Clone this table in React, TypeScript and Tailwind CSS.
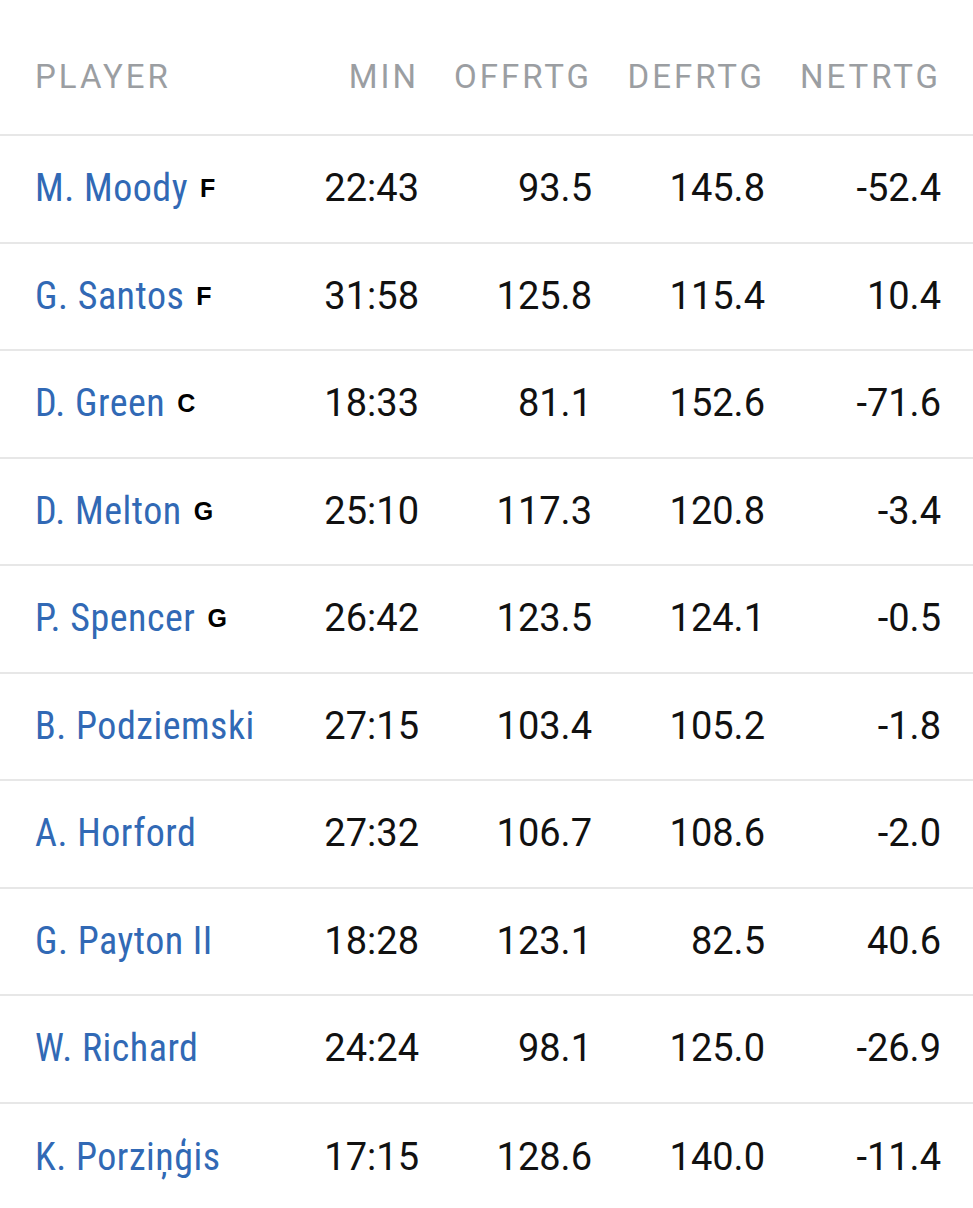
type Row = { name: string; pos?: string; min: string; off: string; def: string; net: string }

const ROWS: Row[] = [
  { name: 'M. Moody', pos: 'F', min: '22:43', off: '93.5', def: '145.8', net: '-52.4' },
  { name: 'G. Santos', pos: 'F', min: '31:58', off: '125.8', def: '115.4', net: '10.4' },
  { name: 'D. Green', pos: 'C', min: '18:33', off: '81.1', def: '152.6', net: '-71.6' },
  { name: 'D. Melton', pos: 'G', min: '25:10', off: '117.3', def: '120.8', net: '-3.4' },
  { name: 'P. Spencer', pos: 'G', min: '26:42', off: '123.5', def: '124.1', net: '-0.5' },
  { name: 'B. Podziemski', min: '27:15', off: '103.4', def: '105.2', net: '-1.8' },
  { name: 'A. Horford', min: '27:32', off: '106.7', def: '108.6', net: '-2.0' },
  { name: 'G. Payton II', min: '18:28', off: '123.1', def: '82.5', net: '40.6' },
  { name: 'W. Richard', min: '24:24', off: '98.1', def: '125.0', net: '-26.9' },
  { name: 'K. Porziņģis', min: '17:15', off: '128.6', def: '140.0', net: '-11.4' },
]

const GRID = 'grid grid-cols-[1fr_120px_173px_173px_176px] pl-[35px] pr-[32px] items-center'

export default function App() {
  return (
    <div className="w-[973px] h-[1208px] overflow-hidden bg-white font-['Roboto',sans-serif]">
      {/* header */}
      <div className={`${GRID} h-[136px] pt-5 border-b-2 border-[#e7e7e7] text-[33px] tracking-[3px] text-[#9b9ea2]`}>
        <div>PLAYER</div>
        <div className="text-right">MIN</div>
        <div className="text-right">OFFRTG</div>
        <div className="text-right">DEFRTG</div>
        <div className="text-right">NETRTG</div>
      </div>

      {ROWS.map((r, i) => (
        <div
          key={r.name}
          className={`${GRID} h-[107.5px] text-[38px] text-[#111] ${i < ROWS.length - 1 ? 'border-b-2 border-[#e7e7e7]' : ''}`}
        >
          <div className="whitespace-nowrap">
            <span className="text-[#3169b5] [font-stretch:condensed] tracking-[0.5px]">{r.name}</span>
            {r.pos && (
              <span className="ml-[12px] align-[4px] text-[25px] font-bold text-black font-['Liberation_Sans',sans-serif]">
                {r.pos}
              </span>
            )}
          </div>
          <div className="text-right">{r.min}</div>
          <div className="text-right">{r.off}</div>
          <div className="text-right">{r.def}</div>
          <div className="text-right">{r.net}</div>
        </div>
      ))}
    </div>
  )
}
